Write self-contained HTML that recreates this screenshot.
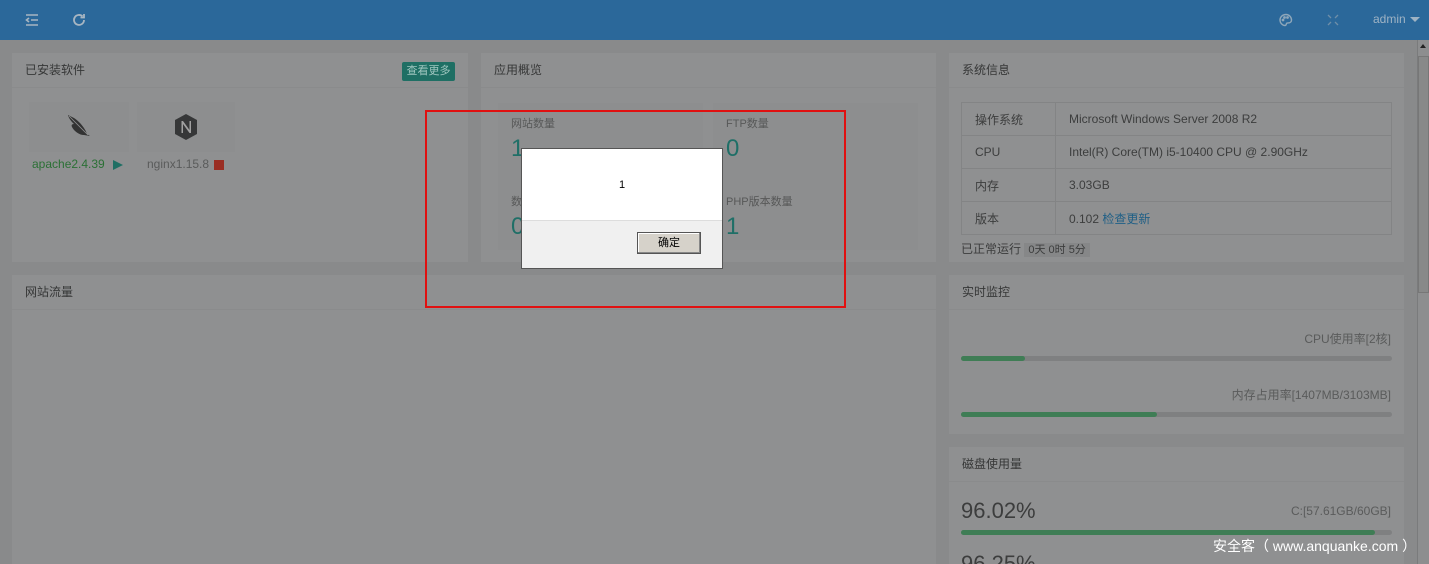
<!DOCTYPE html><html><head><meta charset="utf-8"><style>
*{box-sizing:border-box;margin:0;padding:0}
html{overflow:hidden;width:1429px;height:564px}
body{width:1429px;height:564px;overflow:hidden;background:#898a8b;font-family:"Liberation Sans","Noto Sans CJK SC",sans-serif;font-size:12px;color:#3f4040;position:relative}
.hd{position:absolute;left:0;top:0;width:1429px;height:40px;background:#2b689a}
.p{position:absolute;background:#8f9091;overflow:hidden}
.t{height:35px;line-height:35px;padding-left:13px;border-bottom:1px solid #8a8b8c;color:#363737}
.ab{position:absolute}
.bar{position:absolute;height:5px;background:#7f8081;border-radius:3px}
.bar i{display:block;height:5px;background:#3f7d55;border-radius:3px}
td{border:1px solid #838485;height:33px;padding-left:13px;color:#3c3d3d}
table{border-collapse:collapse}
.num{font-size:24px;color:#1f6f67}
.lb{color:#575858;font-size:11px}
</style></head><body>
<div class="hd">
<svg class="ab" style="left:25px;top:13px" width="14" height="14" viewBox="0 0 14 14" fill="none" stroke="#a8b6c2" stroke-width="1.6"><path d="M1 2h12M6 7h7M1 12h12M4 5l-2.5 2L4 9"/></svg>
<svg class="ab" style="left:72px;top:13px" width="14" height="14" viewBox="0 0 14 14" fill="none" stroke="#a8b6c2" stroke-width="1.8"><path d="M12 7a5 5 0 1 1-1.5-3.6"/><path d="M12 1v3.5H8.5" /></svg>
<svg class="ab" style="left:1279px;top:13px" width="14" height="14" viewBox="0 0 14 14" fill="none" stroke="#8ea7ba" stroke-width="1.4"><path d="M7 1.5C3.5 1.5 1 4 1 7s2.5 5.5 5 5.5c1.5 0 1-1.5 1.7-2.2.8-.8 4.8.6 4.8-3.3 0-3-2.5-5.5-5.5-5.5z"/><circle cx="4" cy="7" r=".7"/><circle cx="5.5" cy="4.5" r=".7"/><circle cx="8.5" cy="4.5" r=".7"/></svg>
<svg class="ab" style="left:1327px;top:14px" width="12" height="12" viewBox="0 0 12 12" fill="none" stroke="#6f8fa8" stroke-width="1.3"><path d="M1 1l3 3M11 1L8 4M1 11l3-3M11 11L8 8"/></svg>
<div class="ab" style="left:1373px;top:12px;color:#9fb3c4;font-size:12px">admin</div>
<div class="ab" style="left:1410px;top:17px;border:5px solid transparent;border-top:5px solid #9fb3c4;border-bottom:0"></div>
</div>

<div class="p" style="left:12px;top:53px;width:456px;height:209px"><div class="t">已安装软件</div>
<div class="ab" style="left:390px;top:9px;width:53px;height:19px;background:#1f6f64;color:#9fc6bf;font-size:11px;line-height:19px;text-align:center;border-radius:2px">查看更多</div>
<div class="ab" style="left:17px;top:49px;width:100px;height:50px;background:#8d8e8f"></div>
<div class="ab" style="left:125px;top:49px;width:98px;height:50px;background:#8d8e8f"></div>
<svg class="ab" style="left:52px;top:60px" width="28" height="28" viewBox="0 0 28 28"><path d="M4 2c1 4 4 7 6 9-2 0-3 1-2 3 2 4 7 8 12 8l6 1-3-2c-2-6-8-13-13-16z" fill="#333"/><path d="M5 3l19 19" stroke="#8f9091" stroke-width="0.8"/></svg>
<svg class="ab" style="left:161px;top:60px" width="26" height="28" viewBox="0 0 26 28"><path d="M13 1l11 6v14l-11 6-11-6V7z" fill="#363738"/><path d="M8.5 20V8h1.5l6.5 9V8h1.5v12H16.5l-6.5-9v9z" fill="#a0a0a0"/></svg>
<div class="ab" style="left:20px;top:104px;font-size:12px;color:#2b7035">apache2.4.39</div>
<div class="ab" style="left:101px;top:107px;border-left:10px solid #1f6f64;border-top:5px solid transparent;border-bottom:5px solid transparent"></div>
<div class="ab" style="left:135px;top:104px;color:#5a5b5b">nginx1.15.8</div>
<div class="ab" style="left:202px;top:107px;width:10px;height:10px;background:#9a2e23"></div>
</div>

<div class="p" style="left:481px;top:53px;width:455px;height:209px"><div class="t">应用概览</div>
<div class="ab" style="left:17px;top:50px;width:205px;height:77px;background:#8d8e8f"></div>
<div class="ab" style="left:232px;top:50px;width:205px;height:77px;background:#8d8e8f"></div>
<div class="ab" style="left:17px;top:127px;width:205px;height:70px;background:#8d8e8f"></div>
<div class="ab" style="left:232px;top:127px;width:205px;height:70px;background:#8d8e8f"></div>
<div class="ab lb" style="left:30px;top:62px">网站数量</div><div class="ab num" style="left:30px;top:82px">1</div>
<div class="ab lb" style="left:245px;top:62px">FTP数量</div><div class="ab num" style="left:245px;top:82px">0</div>
<div class="ab lb" style="left:30px;top:140px">数</div><div class="ab num" style="left:30px;top:160px">0</div>
<div class="ab lb" style="left:245px;top:140px">PHP版本数量</div><div class="ab num" style="left:245px;top:160px">1</div>
</div>

<div class="p" style="left:949px;top:53px;width:455px;height:209px"><div class="t">系统信息</div>
<table class="ab" style="left:12px;top:49px;width:431px">
<tr><td style="width:94px">操作系统</td><td>Microsoft Windows Server 2008 R2</td></tr>
<tr><td>CPU</td><td>Intel(R) Core(TM) i5-10400 CPU @ 2.90GHz</td></tr>
<tr><td>内存</td><td>3.03GB</td></tr>
<tr><td>版本</td><td>0.102 <span style="color:#1f5f86">检查更新</span></td></tr></table>
<div class="ab" style="left:12px;top:187px;color:#3c3d3d">已正常运行 <span style="background:#868788;padding:1px 4px;font-size:11px">0天 0时 5分</span></div>
</div>

<div class="p" style="left:12px;top:275px;width:924px;height:289px"><div class="t">网站流量</div></div>

<div class="p" style="left:949px;top:275px;width:455px;height:159px"><div class="t">实时监控</div>
<div class="ab" style="right:13px;top:55px;color:#5a5b5b">CPU使用率[2核]</div>
<div class="bar" style="left:12px;top:81px;width:431px"><i style="width:64px"></i></div>
<div class="ab" style="right:13px;top:111px;color:#5a5b5b">内存占用率[1407MB/3103MB]</div>
<div class="bar" style="left:12px;top:137px;width:431px"><i style="width:196px"></i></div>
</div>

<div class="p" style="left:949px;top:447px;width:455px;height:117px"><div class="t">磁盘使用量</div>
<div class="ab" style="left:12px;top:51px;font-size:22px;color:#3c3d3d">96.02%</div>
<div class="ab" style="right:13px;top:57px;color:#5a5b5b">C:[57.61GB/60GB]</div>
<div class="bar" style="left:12px;top:83px;width:431px"><i style="width:414px"></i></div>
<div class="ab" style="left:12px;top:104px;font-size:22px;color:#3c3d3d">96.25%</div>
</div>

<div class="ab" style="left:1417px;top:40px;width:12px;height:524px;background:#8d8e8f;border-left:1px solid #7a7b7c"></div>
<div class="ab" style="left:1418px;top:56px;width:11px;height:237px;background:#888989;border:1px solid #777"></div>
<div class="ab" style="left:1420px;top:44px;border:3px solid transparent;border-bottom:4px solid #222;border-top:0"></div>

<div class="ab" style="left:425px;top:110px;width:421px;height:198px;border:2px solid #e01010"></div>
<div class="ab" style="left:521px;top:148px;width:202px;height:121px;background:#f0f0f0;border:1px solid #555"></div>
<div class="ab" style="left:522px;top:149px;width:200px;height:72px;background:#fff;border-bottom:1px solid #ddd"></div>
<div class="ab" style="left:619px;top:179px;font-size:11px;color:#000">1</div>
<div class="ab" style="left:637px;top:232px;width:64px;height:22px;background:#d6d2ca;border:1px solid #555;box-shadow:inset -1px -1px #888,inset 1px 1px #fff;font-size:11px;line-height:20px;text-align:center;color:#000">确定</div>

<div class="ab" style="left:1213px;top:536px;color:#fff;font-size:14px">安全客（ www.anquanke.com ）</div>
</body></html>
